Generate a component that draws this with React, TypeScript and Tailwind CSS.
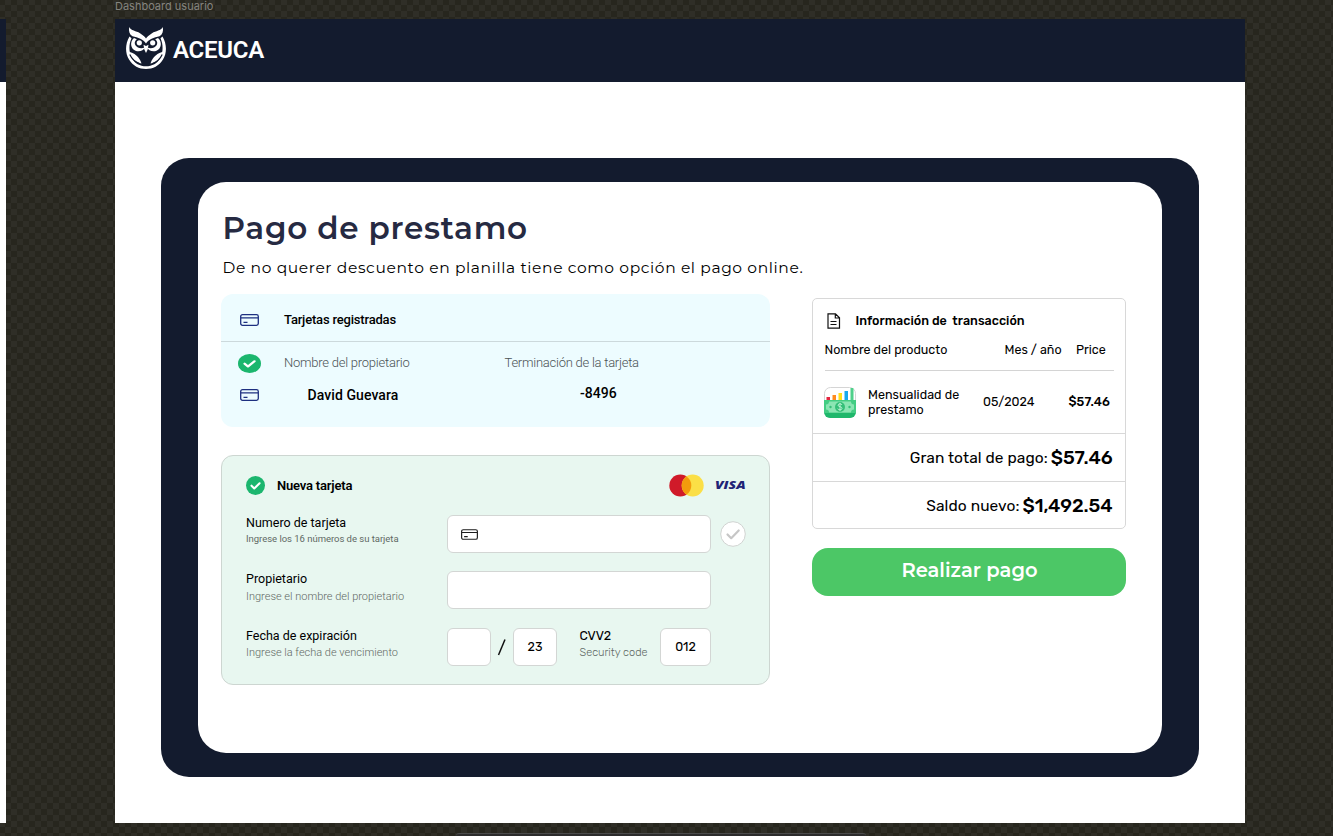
import React from "react";

function T({ c, children }: { c: string; children: string }) {
  return <span className={"inline-block whitespace-pre " + c}>{children}</span>;
}

const R = "font-['Roboto',sans-serif] ";
const I = "font-['Rubik','Inter',sans-serif] ";
const M = "font-['Montserrat','Inter',sans-serif] ";

function CardIcon({ className }: { className: string }) {
  return (
    <svg viewBox="0 0 19 12" className={className} fill="none" stroke="currentColor">
      <rect x="0.7" y="0.7" width="17.6" height="10.6" rx="1.8" strokeWidth="1.3" />
      <path d="M1 3.8h17M3.5 8.3h4" strokeWidth="1.3" />
    </svg>
  );
}

function Check({ className }: { className: string }) {
  return (
    <svg viewBox="0 0 20 20" preserveAspectRatio="none" className={className}>
      <circle cx="10" cy="10" r="10" fill="#1bb66e" />
      <path d="M5.8 10.2l2.9 2.9 5.6-5.4" fill="none" stroke="#fff" strokeWidth="2.2" strokeLinecap="round" strokeLinejoin="round" />
    </svg>
  );
}

function Owl() {
  return (
    <svg viewBox="0 0 40 42" className="h-[42px] w-10" fill="#fff">
      <path d="M3.2 0C5 4 10 3.6 14 6.2C17 8 19 10 20 11.5C21 10 23 8 26 6.2C30 3.6 35 4 36.8 0C37.6 4 36.5 7.5 33.5 9.3C28 10.5 22.5 12.5 20 16.5C17.5 12.5 12 10.5 6.5 9.3C3.5 7.5 2.4 4 3.2 0Z" />
      <path d="M3.5 9.5C-1 17-1 26 3 32.5C7 39 13 42 20 42C27 42 33 39 37 32.5C41 26 41 17 36.5 9.5L34.5 11.3C37.5 18 37 25 34.5 30.5C31.5 36.5 26 39.3 20 39.3C14 39.3 8.5 36.5 5.5 30.5C3 25 2.5 18 5.5 11.3Z" />
      <path d="M8 11C3.5 15 4.5 21.5 9.5 23.8C13.5 25.3 17.8 23.5 18.8 20.5C15 22 11.3 21 9.6 18.6C8.2 16.5 8.5 14 10.8 12.2Z" />
      <path d="M32 11C36.5 15 35.5 21.5 30.5 23.8C26.5 25.3 22.2 23.5 21.2 20.5C25 22 28.7 21 30.4 18.6C31.8 16.5 31.5 14 29.2 12.2Z" />
      <circle cx="13.3" cy="15.8" r="2.6" />
      <circle cx="26.7" cy="15.8" r="2.6" />
      <path d="M17.5 17.8L20 19L22.5 17.8L21.7 22.5L20 26L18.3 22.5Z" />
      <path d="M2.5 24.5C8 26 13.500 29.500 15.500 36.5C9.500 35.500 5 31.5 2.5 24.5Z" />
      <path d="M37.5 24.5C32 26 26.500 29.500 24.500 36.5C30.500 35.500 35 31.5 37.5 24.5Z" />
      <path d="M3.8 27.5C5.8 32 9 34.8 13.500 36.6M36.2 27.5C34.2 32 31 34.8 26.500 36.6" stroke="#131b2e" strokeWidth="1.2" fill="none" />
    </svg>
  );
}

function Money() {
  return (
    <svg viewBox="0 0 32 31" className="h-[31px] w-8">
      <defs>
        <clipPath id="tile"><rect width="32" height="31" rx="6" /></clipPath>
      </defs>
      <rect x="0.5" y="0.5" width="31" height="30" rx="6" fill="#fff" stroke="#d5d5d5" />
      <g clipPath="url(#tile)">
        <rect x="2.5" y="10" width="3.5" height="5" fill="#e5243f" />
        <rect x="8.5" y="8" width="3.5" height="7" fill="#ff8b1f" />
        <rect x="14.5" y="6" width="3.5" height="9" fill="#ffe01a" />
        <rect x="20.5" y="4" width="3.5" height="11" fill="#16a9ee" />
        <rect x="26.5" y="1" width="3" height="14" fill="#4fd08a" />
        <rect y="13.5" width="32" height="18" fill="#1fb76b" />
        <rect x="0" y="13" width="32" height="13" fill="#43cd83" />
        <path d="M5 14.5h22q0 3 3 3v5q-3 0-3 3H5q0-3-3-3v-5q3 0 3-3Z" fill="#8be5b3" />
        <circle cx="16" cy="20" r="5" fill="#34bf78" />
        <circle cx="6.5" cy="20" r="1.2" fill="#34bf78" />
        <circle cx="25.5" cy="20" r="1.2" fill="#34bf78" />
        <path d="M18 18q-.5-1.2-2-1.2t-2 1.3q0 1.2 2 1.6t2 1.7q0 1.4-2 1.4t-2.2-1.2M16 15.8v8.4" fill="none" stroke="#c3f4d8" strokeWidth="0.9" />
      </g>
    </svg>
  );
}

export default function App() {
  return (
    <div className="flex h-[836px] w-[1333px] flex-col overflow-hidden bg-[#27261e] bg-[repeating-conic-gradient(#2f2e27_0_25%,#27261e_0_50%)] bg-[size:12px_12px] bg-[position:-1px_-1px]">
      <div className="flex h-[19px] items-start pl-[115px]">
        <T c="font-['Inter',sans-serif] text-[11px] leading-[12px] text-[#85847f]">Dashboard usuario</T>
      </div>
      <div className="flex h-[804px] gap-[109px]">
        <div className="w-1.5 bg-white"><div className="h-[63px] bg-[#131b2e]" /></div>
        <main className="flex w-[1130px] flex-col bg-white">
          <header className="flex h-[63px] items-start gap-[7px] bg-[#131b2e] pl-[11px] pt-2">
            <Owl />
            <T c={R + "mt-[9px] text-[24px] font-semibold leading-[28px] tracking-[-0.27px] text-white"}>ACEUCA</T>
          </header>
          <section className="ml-[46px] mt-[76px] h-[619px] w-[1038px] rounded-[28px] bg-[#131b2e] pl-[37px] pt-6">
            <div className="flex h-[571px] w-[964px] flex-col rounded-[28px] bg-white pl-[23px] text-black">
              <h1 className="mt-[26px] flex h-[40px] pl-[1.5px]"><T c={M + "text-[31px] font-semibold leading-[40px] tracking-[0.75px] text-[#262a42]"}>Pago de prestamo</T></h1>
              <p className="mt-[9px] flex h-[22px] pl-[1.5px]"><T c={M + "text-[15.5px] leading-[22px] tracking-[0.61px]"}>De no querer descuento en planilla tiene como opción el pago online.</T></p>
              <div className="mt-[15px] flex gap-[42px]">
                <div className="flex w-[549px] flex-col">
                  <div className="h-[133px] rounded-[12px] bg-[#edfcff]">
                    <div className="flex h-12 items-center border-b border-[#ccd9dc] pl-[19px] pt-[5px]">
                      <CardIcon className="h-3 w-[19px] text-[#1d2f80]" />
                      <T c={R + "ml-[25px] text-[13px] font-medium leading-5 tracking-[-0.19px]"}>Tarjetas registradas</T>
                    </div>
                    <div className="flex h-[42px] items-center pl-[17px]">
                      <Check className="h-[19px] w-[23px]" />
                      <T c={R + "ml-[23px] text-[13px] font-light leading-5 tracking-[-0.24px] text-[#4b5355]"}>Nombre del propietario</T>
                      <T c={R + "ml-[95px] text-[13px] font-light leading-5 tracking-[-0.25px] text-[#4b5355]"}>Terminación de la tarjeta</T>
                    </div>
                    <div className="flex h-[22px] items-center pl-[19px]">
                      <CardIcon className="h-3 w-[19px] text-[#1d2f80]" />
                      <T c={R + "ml-[48.5px] text-[14px] font-medium leading-5 tracking-[0.08px]"}>David Guevara</T>
                      <T c={R + "-mt-[4px] ml-[181.5px] text-[14px] font-medium leading-5 tracking-[0.08px]"}>-8496</T>
                    </div>
                  </div>
                  <div className="mt-[28px] flex h-[230px] flex-col rounded-[12px] border border-[#cdd6d1] bg-[#e8f7f0] pl-6">
                    <div className="mt-[18px] flex h-[23px] items-center">
                      <Check className="size-[19px]" />
                      <T c={R + "ml-3 w-[75px] text-[13px] font-semibold leading-5 tracking-[-0.19px]"}>Nueva tarjeta</T>
                      <svg viewBox="0 0 35 23" className="ml-[317px] h-[23px] w-[35px]">
                        <circle cx="11.3" cy="11.5" r="11" fill="#d01a29" />
                        <circle cx="23.7" cy="11.5" r="11" fill="#fbdf46" />
                        <path d="M17.5 2.4a11 11 0 0 1 0 18.2a11 11 0 0 1 0-18.2Z" fill="#f39b0c" />
                      </svg>
                      <span className="-mt-px ml-[10.5px] inline-block origin-left scale-x-[1.27] font-['Open_Sans',sans-serif] text-[11px] font-extrabold italic leading-5 text-[#1f2376]">VISA</span>
                    </div>
                    <div className="mt-[18px] flex h-[38px]">
                      <div className="flex w-[201px] flex-col items-start">
                        <T c={R + "text-[12.5px] leading-4"}>Numero de tarjeta</T>
                        <T c={R + "mt-px text-[9.5px] leading-[14px] tracking-[-0.03px] text-[#5f6964]"}>Ingrese los 16 números de su tarjeta</T>
                      </div>
                      <div className="flex w-[264px] items-center rounded-[6px] border border-[#d3d6d4] bg-white pl-[13px]">
                        <CardIcon className="h-[11px] w-[17px] text-[#1c1c1c]" />
                      </div>
                      <svg viewBox="0 0 26 26" className="ml-[9px] mt-1.5 size-[26px]">
                        <circle cx="13" cy="13" r="12.3" fill="#fff" stroke="#d0d3d1" />
                        <path d="M7.5 13.5l3.7 3.7 7.5-7.7" fill="none" stroke="#c6c6c6" strokeWidth="2.2" strokeLinecap="round" strokeLinejoin="round" />
                      </svg>
                    </div>
                    <div className="mt-[18px] flex h-[38px]">
                      <div className="flex w-[201px] flex-col items-start">
                        <T c={R + "text-[12.5px] leading-4"}>Propietario</T>
                        <T c={R + "mt-[3px] text-[11px] font-light leading-[14px] text-[#5f6864]"}>Ingrese el nombre del propietario</T>
                      </div>
                      <div className="w-[264px] rounded-[6px] border border-[#d3d6d4] bg-white" />
                    </div>
                    <div className="mt-[19px] flex h-[38px]">
                      <div className="flex w-[201px] flex-col items-start">
                        <T c={R + "text-[12.5px] leading-4"}>Fecha de expiración</T>
                        <T c={R + "mt-[2px] text-[11px] font-light leading-[14px] text-[#5f6864]"}>Ingrese la fecha de vencimiento</T>
                      </div>
                      <div className="w-11 rounded-[6px] border border-[#d3d6d4] bg-white" />
                      <svg viewBox="0 0 22 38" className="h-[38px] w-[22px]"><path d="M7.5 27L14 11.5" stroke="#111" strokeWidth="1.5" /></svg>
                      <div className="flex w-11 items-center justify-center rounded-[6px] border border-[#d3d6d4] bg-white"><T c={I + "text-[12.5px] leading-4"}>23</T></div>
                      <div className="ml-[22.5px] flex w-[80.5px] flex-col items-start">
                        <T c={I + "text-[12.5px] leading-4"}>CVV2</T>
                        <T c={I + "mt-[2px] text-[11px] font-light leading-[14px] text-[#5f6864]"}>Security code</T>
                      </div>
                      <div className="flex w-[51px] items-center justify-center rounded-[6px] border border-[#d3d6d4] bg-white"><T c={I + "text-[12.5px] leading-4"}>012</T></div>
                    </div>
                  </div>
                </div>
                <aside className="mt-1 flex w-[314px] flex-col">
                  <div className="flex h-[231px] flex-col rounded-[5px] border border-[#d8d8d8]">
                    <div className="flex h-[43px] items-center pl-3.5 pt-px">
                      <svg viewBox="0 0 14 16" className="h-4 w-3.5" fill="none" stroke="#111" strokeWidth="1.2">
                        <path d="M1 .8h7.5l4 4v10.4H1ZM8.3 1v4h4M3.5 8.5h6M3.5 11.5h6" />
                      </svg>
                      <T c={I + "ml-[14.5px] text-[12.5px] font-medium leading-5 tracking-[0.03px]"}>Información de  transacción</T>
                    </div>
                    <div className="mx-[11.5px] flex h-[29px] border-b border-[#d4d4d4]">
                      <T c={I + "h-4 w-[123px] text-[12.5px] leading-4"}>Nombre del producto</T>
                      <T c={I + "ml-[57px] h-4 w-[58px] text-[12.5px] leading-4"}>Mes / año</T>
                      <T c={I + "ml-[13.5px] h-4 text-[12.5px] leading-4"}>Price</T>
                    </div>
                    <div className="flex h-16 items-center border-b border-[#d8d8d8] pl-[11px]">
                      <Money />
                      <div className="ml-3 flex w-[115px] flex-col items-start">
                        <T c={I + "text-[12.5px] leading-[15px] tracking-[0.04px]"}>Mensualidad de</T>
                        <T c={I + "text-[12.5px] leading-[15px] tracking-[0.04px]"}>prestamo</T>
                      </div>
                      <T c={I + "w-[52px] text-[12.5px] leading-4"}>05/2024</T>
                      <T c={I + "ml-[33.5px] text-[12.5px] font-medium leading-4 tracking-[0.06px]"}>$57.46</T>
                    </div>
                    <div className="flex h-12 items-center justify-end border-b border-[#d8d8d8] pr-[12.5px]">
                      <T c={I + "text-[15.5px] leading-5 tracking-[0.08px]"}>Gran total de pago:</T>
                      <T c={I + "ml-[3px] text-[19px] font-medium leading-5 tracking-[-0.1px]"}>$57.46</T>
                    </div>
                    <div className="flex h-[46px] items-center justify-end pr-[12.5px] pt-px">
                      <T c={I + "text-[15.5px] leading-5 tracking-[0.1px]"}>Saldo nuevo:</T>
                      <T c={I + "ml-[3px] text-[19px] font-medium leading-5 tracking-[-0.1px]"}>$1,492.54</T>
                    </div>
                  </div>
                  <button className="mt-[19px] flex h-12 justify-center rounded-[16px] bg-[#4cc766] pl-px pt-[9px]">
                    <T c={M + "text-[19.5px] font-semibold leading-[26px] text-white"}>Realizar pago</T>
                  </button>
                </aside>
              </div>
            </div>
          </section>
        </main>
      </div>
      <div className="ml-[456px] mt-2.5 h-[3px] w-[410px] rounded-t-lg border-t border-[#4b4b4b] bg-[#2c2c2c]" />
    </div>
  );
}
